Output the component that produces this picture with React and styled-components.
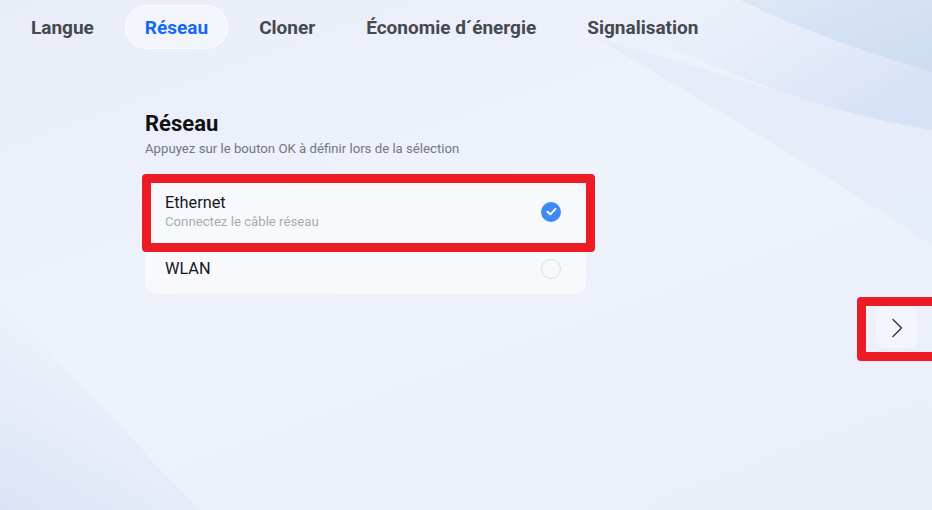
import React from "react";
import styled, { createGlobalStyle } from "styled-components";

const Global = createGlobalStyle`
  html, body {
    margin: 0;
    padding: 0;
  }
  body {
    font-family: Roboto, "Noto Sans", "Liberation Sans", sans-serif;
    -webkit-font-smoothing: antialiased;
  }
`;

const Screen = styled.div`
  position: relative;
  width: 932px;
  height: 510px;
  overflow: hidden;
  background: linear-gradient(160deg, #e8edf8 0%, #eef2fb 45%, #e9eef9 100%);
`;

const Waves = styled.svg`
  position: absolute;
  inset: 0;
  width: 100%;
  height: 100%;
  pointer-events: none;
`;

const Layer = styled.div`
  position: relative;
  display: flex;
  flex-direction: column;
  height: 100%;
`;

const TabBar = styled.nav`
  display: flex;
  gap: 11px;
  padding: 5px 0 0 11px;
`;

const Tab = styled.div`
  padding: 13px 20px 11px;
  line-height: 20px;
  font-size: 19px;
  font-weight: 700;
  border-radius: 22px;
  color: ${(p) => (p.$active ? "#1668f5" : "#46484d")};
  background: ${(p) => (p.$active ? "rgba(255, 255, 255, 0.4)" : "transparent")};
  box-shadow: ${(p) =>
    p.$active ? "inset 0 0 0 1px rgba(255, 255, 255, 0.75)" : "none"};
`;

const Body = styled.div`
  display: flex;
  flex: 1;
`;

const Content = styled.section`
  width: 441px;
  padding: 61px 0 0 145px;
`;

const Title = styled.h1`
  margin: 0;
  font-size: 22px;
  line-height: 28px;
  font-weight: 700;
  color: #111;
`;

const Hint = styled.p`
  margin: 2px 0 0;
  font-size: 13.2px;
  line-height: 18px;
  color: #74767c;
`;

const Card = styled.div`
  position: relative;
  margin-top: 25px;
  border-radius: 12px;
  background: rgba(255, 255, 255, 0.55);
`;

const Row = styled.div`
  display: flex;
  align-items: center;
  justify-content: space-between;
  padding: ${(p) => (p.$tall ? "10px 25px 14px 20px" : "0 25px 0 20px")};
  height: ${(p) => (p.$tall ? "auto" : "50px")};
  box-sizing: border-box;
`;

const Texts = styled.div`
  display: flex;
  flex-direction: column;
`;

const Label = styled.span`
  font-size: 16.3px;
  line-height: 20px;
  color: #16171a;
`;

const Sub = styled.span`
  font-size: 13.2px;
  line-height: 17px;
  color: #a8abb1;
`;

const Radio = styled.span`
  display: inline-flex;
  align-items: center;
  justify-content: center;
  width: 20px;
  height: 20px;
  border-radius: 50%;
  box-sizing: border-box;
  background: ${(p) => (p.$on ? "#3d8af5" : "transparent")};
  border: ${(p) => (p.$on ? "none" : "1.5px solid #dcdee3")};
`;

const Side = styled.div`
  flex: 1;
  display: flex;
  justify-content: flex-end;
  padding: 258px 15px 0 0;
`;

const NextButton = styled.button`
  position: relative;
  display: flex;
  align-items: center;
  justify-content: center;
  width: 41px;
  height: 41px;
  padding: 0;
  border: none;
  border-radius: 8px;
  background: rgba(255, 255, 255, 0.4);
  color: #3b3d42;
`;

// red annotation frames lying over the UI
const Mark = styled.div`
  position: absolute;
  border: 9px solid #ec1b24;
  border-radius: 4px;
  pointer-events: none;
  box-sizing: border-box;
`;

const RowMark = styled(Mark)`
  left: -3px;
  top: -9px;
  width: 453px;
  height: 78px;
`;

const ButtonMark = styled(Mark)`
  left: -19px;
  top: -10px;
  width: 85px;
  height: 64px;
  border-radius: 4px 0 0 4px;
`;

const Check = () => (
  <svg width="13" height="13" viewBox="0 0 12 12">
    <path
      d="M2.3 6.2 L4.9 8.6 L9.7 3.6"
      fill="none"
      stroke="#fff"
      strokeWidth="1.8"
      strokeLinecap="round"
      strokeLinejoin="round"
    />
  </svg>
);

const Chevron = () => (
  <svg width="14" height="22" viewBox="0 0 14 22">
    <path
      d="M3 2.5 L11.5 11 L3 19.5"
      fill="none"
      stroke="currentColor"
      strokeWidth="1.5"
      strokeLinecap="round"
      strokeLinejoin="round"
    />
  </svg>
);

const tabs = ["Langue", "Réseau", "Cloner", "Économie d´énergie", "Signalisation"];

export default function App() {
  return (
    <Screen>
      <Global />
      <Waves viewBox="0 0 932 510" preserveAspectRatio="none">
        <defs>
          <linearGradient id="w1" x1="0" y1="0" x2="1" y2="1">
            <stop offset="0" stopColor="#dde7f6" />
            <stop offset="1" stopColor="#cddcf2" />
          </linearGradient>
          <linearGradient id="w2" x1="0" y1="0" x2="1" y2="0.6">
            <stop offset="0" stopColor="#eef2fb" stopOpacity="0" />
            <stop offset="1" stopColor="#d6e2f5" />
          </linearGradient>
          <linearGradient id="w3" x1="0" y1="1" x2="0.6" y2="0">
            <stop offset="0" stopColor="#d9e3f5" />
            <stop offset="1" stopColor="#eaeff9" stopOpacity="0" />
          </linearGradient>
        </defs>
        <path d="M560 0 C 700 60, 800 110, 932 130 L932 0 Z" fill="url(#w2)" />
        <path d="M740 0 C 800 30, 860 50, 932 72 L932 0 Z" fill="url(#w1)" />
        <path
          d="M600 40 C 700 100, 820 170, 932 245 L932 130 C 820 110, 720 70, 600 40 Z"
          fill="#e3ebf8"
          opacity="0.7"
        />
        <path d="M0 300 C 80 380, 140 450, 200 510 L0 510 Z" fill="url(#w3)" />
      </Waves>
      <Layer>
        <TabBar>
          {tabs.map((t) => (
            <Tab key={t} $active={t === "Réseau"}>
              {t}
            </Tab>
          ))}
        </TabBar>
        <Body>
          <Content>
            <Title>Réseau</Title>
            <Hint>Appuyez sur le bouton OK à définir lors de la sélection</Hint>
            <Card>
              <Row $tall>
                <Texts>
                  <Label>Ethernet</Label>
                  <Sub>Connectez le câble réseau</Sub>
                </Texts>
                <Radio $on>
                  <Check />
                </Radio>
              </Row>
              <Row>
                <Label>WLAN</Label>
                <Radio />
              </Row>
              <RowMark />
            </Card>
          </Content>
          <Side>
            <NextButton aria-label="Suivant">
              <Chevron />
              <ButtonMark />
            </NextButton>
          </Side>
        </Body>
      </Layer>
    </Screen>
  );
}
